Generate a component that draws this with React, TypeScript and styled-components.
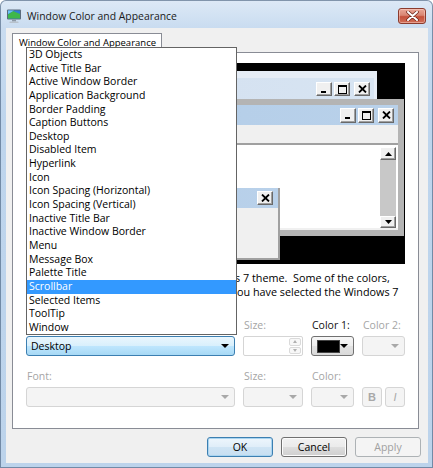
import React from 'react';
import styled, { createGlobalStyle } from 'styled-components';

const GlobalStyle = createGlobalStyle`
  html, body {
    margin: 0;
    padding: 0;
    background: #ffffff;
  }
  body {
    font-family: "Open Sans", "Noto Sans", sans-serif;
    font-size: 10.5px;
    color: #000;
  }
`;

const items = [
  '3D Objects',
  'Active Title Bar',
  'Active Window Border',
  'Application Background',
  'Border Padding',
  'Caption Buttons',
  'Desktop',
  'Disabled Item',
  'Hyperlink',
  'Icon',
  'Icon Spacing (Horizontal)',
  'Icon Spacing (Vertical)',
  'Inactive Title Bar',
  'Inactive Window Border',
  'Menu',
  'Message Box',
  'Palette Title',
  'Scrollbar',
  'Selected Items',
  'ToolTip',
  'Window',
];

/* ---------- window chrome ---------- */

const Frame = styled.div`
  position: relative;
  width: 433px;
  height: 468px;
  box-sizing: border-box;
  display: flex;
  flex-direction: column;
  border-radius: 6px 6px 0 0;
  overflow: hidden;
  background: linear-gradient(180deg, #dde9f6 0px, #c9dcf0 28px, #bed5ed 120px, #bcd3eb 100%);
  box-shadow: inset 0 0 0 1px rgba(52, 78, 110, 0.55);
`;

const TitleBar = styled.div`
  height: 28px;
  display: flex;
  align-items: flex-start;
  padding-left: 6px;
  flex-shrink: 0;
`;

const TitleText = styled.div`
  font-size: 10.4px;
  line-height: 16px;
  margin-top: 8px;
  margin-left: 5px;
  color: #1a1a1a;
`;

const CloseBtn = styled.div`
  margin-left: auto;
  margin-right: 7px;
  margin-top: 8px;
  width: 28px;
  height: 16px;
  box-sizing: border-box;
  border: 1px solid #8b3b2d;
  border-radius: 3px;
  background: linear-gradient(180deg, #e9a797 0%, #d98572 45%, #c5503a 55%, #d0705a 100%);
  box-shadow: inset 0 0 0 1px rgba(255, 220, 210, 0.45);
  display: flex;
  align-items: center;
  justify-content: center;
`;

const Client = styled.div`
  flex: 1;
  margin: 0 5px 5px 6px;
  background: #f0f0f0;
  padding: 5px 8px 6px 6px;
  display: flex;
  flex-direction: column;
`;

const TabHeader = styled.div`
  position: relative;
  z-index: 1;
  width: 150px;
  height: 20px;
  box-sizing: border-box;
  border: 1px solid #898c95;
  border-bottom: none;
  background: #ffffff;
  padding-left: 6px;
  font-size: 9.5px;
  line-height: 17px;
  white-space: nowrap;
  margin-bottom: -1px;
`;

const Panel = styled.div`
  width: 407px;
  height: 377px;
  box-sizing: border-box;
  border: 1px solid #898c95;
  background: #ffffff;
  padding: 10px 13px 0 13px;
  display: flex;
  flex-direction: column;
`;

/* ---------- preview ---------- */

const Preview = styled.div`
  position: relative;
  height: 201px;
  background: #000000;
  overflow: hidden;
  flex-shrink: 0;
`;

const SampleWin = styled.div<{ $x: number; $y: number; $w: number; $h: number }>`
  position: absolute;
  left: ${p => p.$x}px;
  top: ${p => p.$y}px;
  width: ${p => p.$w}px;
  height: ${p => p.$h}px;
  box-sizing: border-box;
  display: flex;
  flex-direction: column;
`;

const InactiveWin = styled(SampleWin)`
  background: #e6edf6;
  padding: 7px 3px 3px 3px;
`;

const ActiveWin = styled(SampleWin)`
  background: #b4b4b4;
  padding: 6px 6px 6px 6px;
`;

const MsgWin = styled(SampleWin)`
  background: #f0f0f0;
  border-right: 2px solid #a0a0a0;
  border-bottom: 2px solid #a0a0a0;
  box-shadow: inset 1px 1px 0 #e0e0e0;
`;

const WinTitle = styled.div<{ $active: boolean; $h: number }>`
  height: ${p => p.$h}px;
  flex-shrink: 0;
  display: flex;
  align-items: center;
  justify-content: flex-end;
  gap: 2px;
  padding: 0 4px;
  background: ${p =>
    p.$active
      ? 'linear-gradient(90deg, #99b4d1 0%, #b6cfe9 55%, #b9d1ea 100%)'
      : 'linear-gradient(90deg, #bfcddb 0%, #d5e2f1 55%, #d7e4f2 100%)'};
`;

const CapBtn = styled.div<{ $h: number }>`
  width: 16px;
  height: ${p => p.$h}px;
  box-sizing: border-box;
  background: #f0f0f0;
  border: 1px solid;
  border-color: #ffffff #696969 #696969 #ffffff;
  box-shadow: inset -1px -1px 0 #a0a0a0;
  display: flex;
  align-items: center;
  justify-content: center;
`;

const MenuBar = styled.div`
  height: 18px;
  flex-shrink: 0;
  background: #f0f0f0;
`;

const WinBody = styled.div`
  flex: 1;
  background: #f0f0f0;
  padding: 0 0 2px 0;
  display: flex;
`;

const TextArea = styled.div`
  flex: 1;
  display: flex;
  justify-content: flex-end;
  background: #ffffff;
  border-top: 2px solid #a0a0a0;
  border-left: 2px solid #a0a0a0;
`;

const ScrollBar = styled.div`
  width: 16px;
  margin: 2px 2px 0 0;
  display: flex;
  flex-direction: column;
  justify-content: space-between;
  background: #c8c8c8;
`;

const MsgBody = styled.div`
  flex: 1;
`;

/* ---------- description ---------- */

const Description = styled.div`
  margin-top: 7px;
  font-size: 10.8px;
  line-height: 14px;
  white-space: nowrap;
  color: #000;
`;

const DescLine = styled.div`
  display: flex;
`;

const Lead = styled.span<{ $w: number }>`
  width: ${p => p.$w}px;
  flex-shrink: 0;
  overflow: hidden;
  display: flex;
  justify-content: flex-end;
`;

/* ---------- fields ---------- */

const Fields = styled.div`
  margin-top: 19px;
  display: grid;
  grid-template-columns: 209px 60px 43px 43px;
  column-gap: 8px;
  row-gap: 13px;
`;

const Field = styled.div`
  display: flex;
  flex-direction: column;
  gap: 4px;
`;

const Label = styled.div<{ $disabled?: boolean }>`
  height: 14px;
  line-height: 14px;
  padding-left: 1px;
  color: ${p => (p.$disabled ? '#a5a5a5' : '#111111')};
`;

const Combo = styled.div<{ $variant: 'focus' | 'disabled' | 'color' }>`
  height: 20px;
  box-sizing: border-box;
  border-radius: 3px;
  display: flex;
  align-items: center;
  padding: 0 5px 0 4px;
  border: 1px solid
    ${p => (p.$variant === 'focus' ? '#3c7fb1' : p.$variant === 'color' ? '#707070' : '#d5d5d5')};
  background: ${p =>
    p.$variant === 'focus'
      ? 'linear-gradient(180deg, #eaf6fd 0%, #d9f0fc 48%, #bee6fd 52%, #a7d9f5 100%)'
      : p.$variant === 'color'
      ? 'linear-gradient(180deg, #f6f6f6 0%, #eeeeee 48%, #e2e2e2 52%, #d9d9d9 100%)'
      : '#f4f4f4'};
`;

const ComboText = styled.span`
  flex: 1;
`;

const Swatch = styled.div`
  width: 21px;
  height: 11px;
  background: #000;
  border: 1px solid #444;
  margin-left: 1px;
  margin-right: auto;
`;

const Arrow = styled.div<{ $color: string }>`
  width: 0;
  height: 0;
  border-left: 4px solid transparent;
  border-right: 4px solid transparent;
  border-top: 4px solid ${p => p.$color};
`;

const SpinBox = styled.div`
  height: 20px;
  box-sizing: border-box;
  border: 1px solid #d5d5d5;
  border-radius: 2px;
  background: #ffffff;
  display: flex;
  justify-content: flex-end;
  padding: 1px;
`;

const Spinner = styled.div`
  width: 12px;
  display: flex;
  flex-direction: column;
  gap: 1px;
`;

const SpinHalf = styled.div`
  flex: 1;
  border: 1px solid #dadada;
  border-radius: 2px;
  background: #f7f7f7;
  display: flex;
  align-items: center;
  justify-content: center;
`;

const TinyArrow = styled.div<{ $up?: boolean }>`
  width: 0;
  height: 0;
  border-left: 2.5px solid transparent;
  border-right: 2.5px solid transparent;
  ${p => (p.$up ? 'border-bottom: 3px solid #b0b0b0;' : 'border-top: 3px solid #b0b0b0;')}
`;

const StyleButtons = styled.div`
  display: flex;
  justify-content: space-between;
`;

const StyleBtn = styled.div<{ $italic?: boolean }>`
  width: 20px;
  height: 20px;
  box-sizing: border-box;
  border: 1px solid #d5d5d5;
  border-radius: 3px;
  background: #f4f4f4;
  color: #a8a8a8;
  display: flex;
  align-items: center;
  justify-content: center;
  font-family: "Liberation Sans", Arial, sans-serif;
  font-size: 11px;
  font-weight: ${p => (p.$italic ? 'normal' : 'bold')};
  font-style: ${p => (p.$italic ? 'italic' : 'normal')};
`;

/* ---------- dialog buttons ---------- */

const ButtonRow = styled.div`
  margin-top: 8px;
  margin-right: -1px;
  display: flex;
  justify-content: flex-end;
  gap: 8px;
`;

const DlgButton = styled.div<{ $kind: 'default' | 'normal' | 'disabled' }>`
  width: 66px;
  height: 20px;
  box-sizing: border-box;
  border-radius: 3px;
  display: flex;
  align-items: center;
  justify-content: center;
  border: 1px solid
    ${p => (p.$kind === 'default' ? '#3c7fb1' : p.$kind === 'normal' ? '#707070' : '#adb2b5')};
  color: ${p => (p.$kind === 'disabled' ? '#a0a0a0' : '#000')};
  background: ${p =>
    p.$kind === 'default'
      ? 'linear-gradient(180deg, #eef6fc 0%, #e0eef9 48%, #cfe4f4 52%, #c6def1 100%)'
      : p.$kind === 'normal'
      ? 'linear-gradient(180deg, #f2f2f2 0%, #ebebeb 48%, #dddddd 52%, #cfcfcf 100%)'
      : '#f4f4f4'};
  box-shadow: ${p =>
    p.$kind === 'default' ? 'inset 0 0 0 1px #a9d4f0' : p.$kind === 'normal' ? 'inset 0 0 0 1px #fcfcfc' : 'none'};
`;

/* ---------- popup list ---------- */

const ListPopup = styled.div`
  position: absolute;
  left: 26px;
  top: 47px;
  width: 211px;
  box-sizing: border-box;
  border: 1px solid #646464;
  background: #ffffff;
  z-index: 5;
`;

const ListItem = styled.div<{ $selected?: boolean }>`
  height: 13.65px;
  line-height: 13.65px;
  padding-left: 2px;
  white-space: nowrap;
  background: ${p => (p.$selected ? '#3399ff' : 'transparent')};
  color: ${p => (p.$selected ? '#ffffff' : '#000000')};
`;

/* ---------- drawings ---------- */

const AppIcon = () => (
  <svg width="16" height="16" viewBox="0 0 16 16" style={{ marginTop: 8 }}>
    <rect x="1" y="1.5" width="14" height="10" rx="1" fill="#5a6b7c" />
    <rect x="2" y="2.5" width="12" height="8" fill="#2f7fd6" />
    <path d="M2 6.5 L7 3 L14 6 L14 10.5 L2 10.5 Z" fill="#3fb74a" />
    <path d="M2 2.5 L8 2.5 L2 6 Z" fill="#6ec3f4" />
    <rect x="6" y="11.5" width="4" height="2" fill="#8d99a6" />
    <rect x="3.5" y="13.5" width="9" height="1.6" rx="0.5" fill="#b8c2cc" />
  </svg>
);

const CloseGlyph = () => (
  <svg width="13" height="10" viewBox="0 0 13 10">
    <path d="M2 1 L11 9 M11 1 L2 9" stroke="#6b2418" strokeWidth="3.4" strokeLinecap="round" />
    <path d="M2 1 L11 9 M11 1 L2 9" stroke="#ffffff" strokeWidth="2" strokeLinecap="round" />
  </svg>
);

const MinGlyph = () => (
  <svg width="8" height="8" viewBox="0 0 8 8">
    <rect x="1" y="6" width="5" height="2" fill="#000" />
  </svg>
);

const MaxGlyph = () => (
  <svg width="9" height="9" viewBox="0 0 9 9">
    <rect x="0.5" y="0.5" width="8" height="8" fill="none" stroke="#000" />
    <rect x="0" y="0" width="9" height="2" fill="#000" />
  </svg>
);

const XGlyph = () => (
  <svg width="9" height="8" viewBox="0 0 9 8">
    <path d="M1 0.5 L8 7.5 M8 0.5 L1 7.5" stroke="#000" strokeWidth="1.8" />
  </svg>
);

const ScrollArrow = ({ up }: { up?: boolean }) => (
  <svg width="7" height="4" viewBox="0 0 7 4">
    <path d={up ? 'M0 4 L3.5 0 L7 4 Z' : 'M0 0 L3.5 4 L7 0 Z'} fill="#000" />
  </svg>
);

const Caption = ({ h, close }: { h: number; close?: boolean }) => (
  <>
    {!close && (
      <CapBtn $h={h}>
        <MinGlyph />
      </CapBtn>
    )}
    {!close && (
      <CapBtn $h={h}>
        <MaxGlyph />
      </CapBtn>
    )}
    <CapBtn $h={h} style={{ marginLeft: close ? 0 : 2 }}>
      <XGlyph />
    </CapBtn>
  </>
);

const App = () => {
  return (
    <>
      <GlobalStyle />
      <Frame>
        <TitleBar>
          <AppIcon />
          <TitleText>Window Color and Appearance</TitleText>
          <CloseBtn>
            <CloseGlyph />
          </CloseBtn>
        </TitleBar>

        <Client>
          <TabHeader>Window Color and Appearance</TabHeader>
          <Panel>
            <Preview>
              <InactiveWin $x={8} $y={8} $w={343} $h={70}>
                <WinTitle $active={false} $h={22}>
                  <Caption h={14} />
                </WinTitle>
              </InactiveWin>

              <ActiveWin $x={18} $y={36} $w={360} $h={137}>
                <WinTitle $active $h={20}>
                  <Caption h={15} />
                </WinTitle>
                <MenuBar />
                <WinBody>
                  <TextArea>
                    <ScrollBar>
                      <CapBtn $h={13}>
                        <ScrollArrow up />
                      </CapBtn>
                      <CapBtn $h={12}>
                        <ScrollArrow />
                      </CapBtn>
                    </ScrollBar>
                  </TextArea>
                </WinBody>
              </ActiveWin>

              <MsgWin $x={26} $y={125} $w={228} $h={72}>
                <WinTitle $active $h={20} style={{ paddingRight: 5 }}>
                  <Caption h={14} close />
                </WinTitle>
                <MsgBody />
              </MsgWin>
            </Preview>

            <Description>
              <DescLine>
                <Lead $w={209}>This color scheme is designed for the Window</Lead>
                <span>s 7 theme.&nbsp; Some of the colors,</span>
              </DescLine>
              <DescLine>
                <Lead $w={211}>sizes and fonts selected here only apply if y</Lead>
                <span>ou have selected the Windows 7</span>
              </DescLine>
            </Description>

            <Fields>
              <Field>
                <Label>Item:</Label>
                <Combo $variant="focus">
                  <ComboText>Desktop</ComboText>
                  <Arrow $color="#000" />
                </Combo>
              </Field>
              <Field>
                <Label $disabled>Size:</Label>
                <SpinBox>
                  <Spinner>
                    <SpinHalf>
                      <TinyArrow $up />
                    </SpinHalf>
                    <SpinHalf>
                      <TinyArrow />
                    </SpinHalf>
                  </Spinner>
                </SpinBox>
              </Field>
              <Field>
                <Label>Color 1:</Label>
                <Combo $variant="color">
                  <Swatch />
                  <Arrow $color="#000" />
                </Combo>
              </Field>
              <Field>
                <Label $disabled>Color 2:</Label>
                <Combo $variant="disabled">
                  <ComboText />
                  <Arrow $color="#a8a8a8" />
                </Combo>
              </Field>

              <Field>
                <Label $disabled>Font:</Label>
                <Combo $variant="disabled">
                  <ComboText />
                  <Arrow $color="#a8a8a8" />
                </Combo>
              </Field>
              <Field>
                <Label $disabled>Size:</Label>
                <Combo $variant="disabled">
                  <ComboText />
                  <Arrow $color="#a8a8a8" />
                </Combo>
              </Field>
              <Field>
                <Label $disabled>Color:</Label>
                <Combo $variant="disabled">
                  <ComboText />
                  <Arrow $color="#a8a8a8" />
                </Combo>
              </Field>
              <Field>
                <Label $disabled>&nbsp;</Label>
                <StyleButtons>
                  <StyleBtn>B</StyleBtn>
                  <StyleBtn $italic>I</StyleBtn>
                </StyleButtons>
              </Field>
            </Fields>
          </Panel>

          <ButtonRow>
            <DlgButton $kind="default">OK</DlgButton>
            <DlgButton $kind="normal">Cancel</DlgButton>
            <DlgButton $kind="disabled">Apply</DlgButton>
          </ButtonRow>
        </Client>

        <ListPopup>
          {items.map(it => (
            <ListItem key={it} $selected={it === 'Scrollbar'}>
              {it}
            </ListItem>
          ))}
        </ListPopup>
      </Frame>
    </>
  );
};

export default App;
